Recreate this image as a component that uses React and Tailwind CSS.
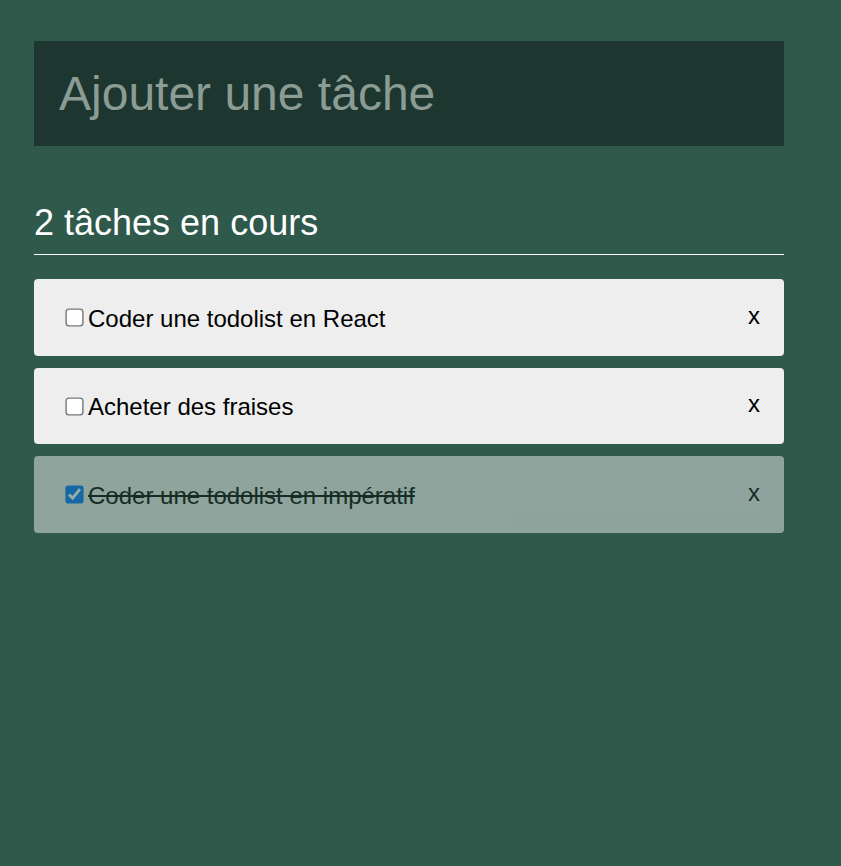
import React from "react";

const tasks = [
  { label: "Coder une todolist en React", done: false },
  { label: "Acheter des fraises", done: false },
  { label: "Coder une todolist en impératif", done: true },
];

export default function App() {
  return (
    <div className="min-h-[866px] w-full bg-[#2e594b] font-['Liberation_Sans',Arial,sans-serif]">
      <div className="pt-[41px] pl-[34px] w-[784px]">
        <input
          type="text"
          placeholder="Ajouter une tâche"
          className="block w-[750px] h-[105px] bg-[#1d362f] px-[25px] text-[48px] text-white placeholder:text-[#8b9c95] outline-none border-0"
        />
        <h2 className="mt-[56px] pb-[11px] border-b border-white text-[36px] leading-[41px] text-white">
          2 tâches en cours
        </h2>
        <div className="mt-[24px] flex flex-col gap-[12px]">
          {tasks.map((t) => (
            <div
              key={t.label}
              className={
                "h-[76.5px] rounded-[4px] bg-[#eeeeee] flex items-center pl-[31px] pr-[24px] text-[24px] text-black " +
                (t.done ? "opacity-50" : "")
              }
            >
              <label className="flex items-center flex-1 pt-[3px]">
                <input
                  type="checkbox"
                  defaultChecked={t.done}
                  className="w-[13px] h-[13px] scale-[1.4] m-0 ml-[2.5px] mr-[7.5px] mt-[-2px]"
                />
                <span className={t.done ? "line-through" : ""}>{t.label}</span>
              </label>
              <span className="mb-[3px] leading-[28px]">x</span>
            </div>
          ))}
        </div>
      </div>
    </div>
  );
}
